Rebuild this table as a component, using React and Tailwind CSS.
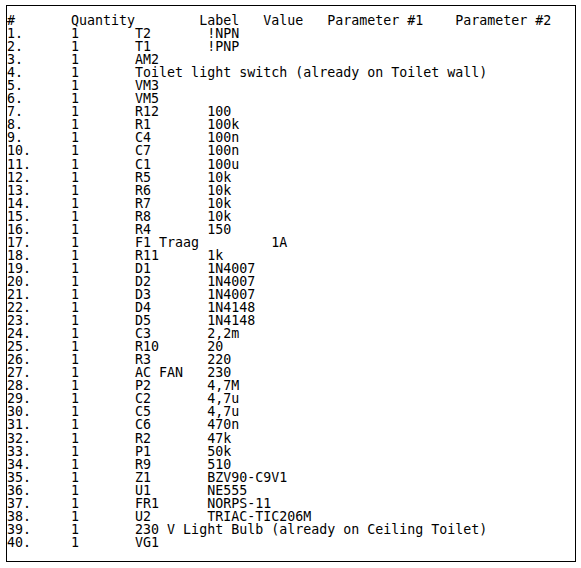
import React from "react";

const rows = [
  ["T2", "!NPN"],
  ["T1", "!PNP"],
  ["AM2"],
  ["Toilet light switch (already on Toilet wall)"],
  ["VM3"],
  ["VM5"],
  ["R12", "100"],
  ["R1", "100k"],
  ["C4", "100n"],
  ["C7", "100n"],
  ["C1", "100u"],
  ["R5", "10k"],
  ["R6", "10k"],
  ["R7", "10k"],
  ["R8", "10k"],
  ["R4", "150"],
  ["F1 Traag", "", "1A"],
  ["R11", "1k"],
  ["D1", "1N4007"],
  ["D2", "1N4007"],
  ["D3", "1N4007"],
  ["D4", "1N4148"],
  ["D5", "1N4148"],
  ["C3", "2,2m"],
  ["R10", "20"],
  ["R3", "220"],
  ["AC FAN", "230"],
  ["P2", "4,7M"],
  ["C2", "4,7u"],
  ["C5", "4,7u"],
  ["C6", "470n"],
  ["R2", "47k"],
  ["P1", "50k"],
  ["R9", "510"],
  ["Z1", "BZV90-C9V1"],
  ["U1", "NE555"],
  ["FR1", "NORPS-11"],
  ["U2", "TRIAC-TIC206M"],
  ["230 V Light Bulb (already on Ceiling Toilet)"],
  ["VG1"],
];

const pad = (s, n) => (s.length >= n ? s + " " : s + " ".repeat(n - s.length));

function line(r, i) {
  const [label, value, extra] = r;
  let s = pad(`${i + 1}.`, 8) + pad("1", 8);
  if (value === undefined) return s + label;
  s += pad(label, 9);
  if (extra === undefined) return s + value;
  return pad(s + value, 33) + extra;
}

const header =
  pad("#", 8) + pad("Quantity", 16) + pad("Label", 8) + pad("Value", 8) + pad("Parameter #1", 16) + "Parameter #2";

export default function App() {
  return (
    <div className="w-[581px] h-[568px] bg-white pt-[5px] pl-[6px]">
      <div className="w-[570px] h-[557px] border border-black pt-[8px] text-black">
        <div className="whitespace-pre font-['DejaVu_Sans_Mono',monospace] text-[13.3px] leading-[13.05px]">
          <div>{header}</div>
          {rows.map((r, i) => (
            <div key={i}>{line(r, i)}</div>
          ))}
        </div>
      </div>
    </div>
  );
}
